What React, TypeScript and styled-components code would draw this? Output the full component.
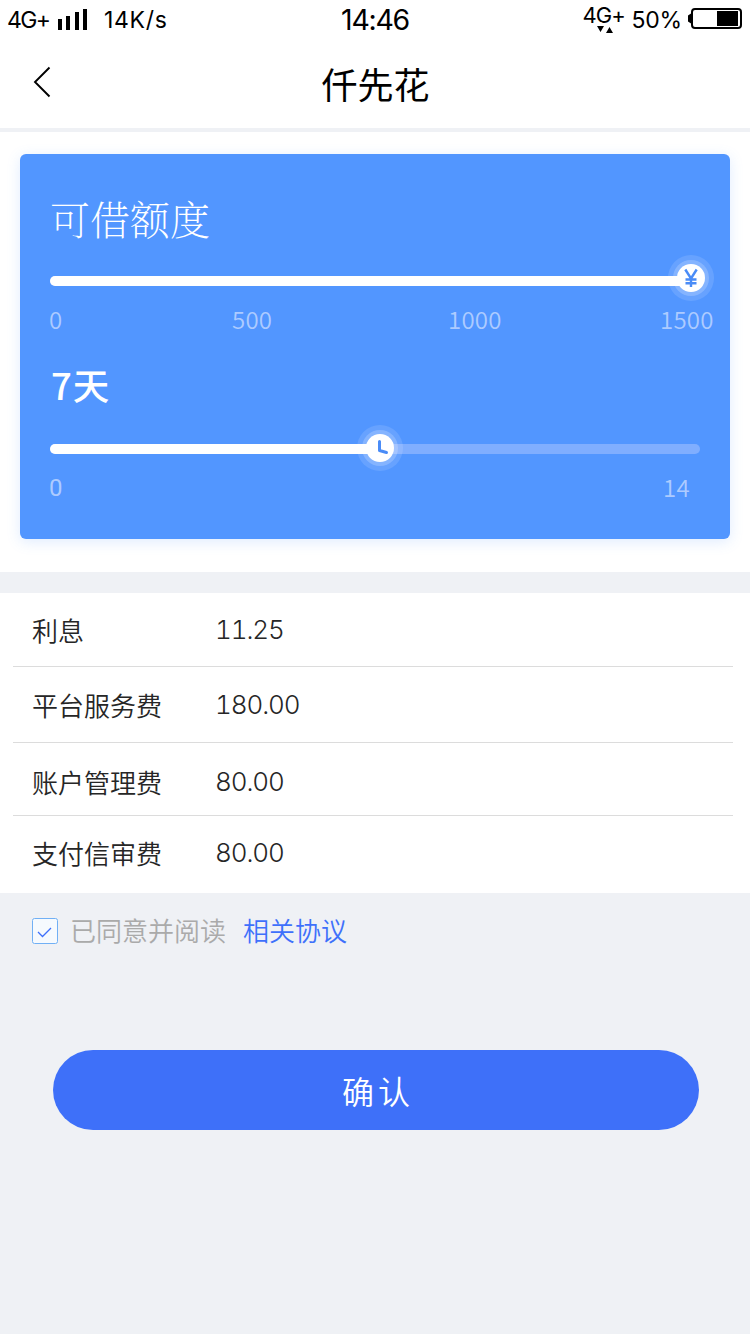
import React from 'react';
import styled, { createGlobalStyle } from 'styled-components';

const GlobalStyle = createGlobalStyle`
  * { box-sizing: border-box; }
  body { margin: 0; background: #eff1f5; }
`;

const cjk = `"Noto Sans CJK SC", sans-serif`;
const latin = `Inter, "Noto Sans CJK SC", sans-serif`;

const Screen = styled.div`
  width: 750px;
  min-height: 1334px;
  display: flex;
  flex-direction: column;
  background: #eff1f5;
  font-family: ${cjk};
  white-space: nowrap;
`;

const StatusBar = styled.div`
  display: grid;
  grid-template-columns: 1fr auto 1fr;
  height: 40px;
  padding: 0 7px;
  background: #fff;
  color: #000;
  font-family: ${latin};
`;

const StatusGroup = styled.div<{ $end?: boolean }>`
  display: flex;
  align-items: flex-start;
  justify-content: ${p => (p.$end ? 'flex-end' : 'flex-start')};
`;

const StatusText = styled.span<{ $size?: number; $track?: number; $top?: number; $gap?: number }>`
  font-size: ${p => p.$size ?? 23}px;
  line-height: 28px;
  letter-spacing: ${p => p.$track ?? 0}px;
  margin-top: ${p => p.$top ?? 6}px;
  margin-left: ${p => p.$gap ?? 0}px;
`;

const SignalIcon = styled.svg`
  margin: 9px 0 0 9px;
`;

const NetworkType = styled.div`
  display: flex;
  flex-direction: column;
  width: 43px;
`;

const TrafficArrows = styled.svg`
  margin: -3px 0 0 14px;
`;

const BatteryIcon = styled.svg`
  margin: 8px 0 0 6px;
`;

const Header = styled.header`
  display: grid;
  grid-template-columns: 101px 1fr 100px;
  height: 92px;
  border-bottom: 4px solid #eff1f5;
  background: #fff;
`;

const BackButton = styled.button`
  display: flex;
  padding: 25px 0 0 32px;
  border: 0;
  background: none;
`;

const Title = styled.h1`
  margin: 0;
  text-align: center;
  font-size: 36px;
  font-weight: 400;
  line-height: 87px;
  color: #000;
`;

const CardSection = styled.section`
  height: 440px;
  padding: 22px 20px 33px;
  background: #fff;
`;

const Card = styled.div`
  display: flex;
  flex-direction: column;
  height: 385px;
  padding: 0 30px;
  border-radius: 6px;
  background: #5296ff;
  box-shadow: 0 3px 14px rgba(82, 150, 255, 0.18);
  color: #fff;
`;

const CardTitle = styled.h2`
  margin: 0;
  padding-top: 34px;
  height: 122px;
  font-family: "Noto Serif CJK SC", ${cjk};
  font-size: 40px;
  font-weight: 200;
  line-height: 60px;
`;

const Term = styled.div`
  height: 102px;
  padding: 15px 0 0 1px;
  font-size: 36.500px;
  font-weight: 500;
  line-height: 56px;
`;

const TermNumber = styled.span`
  margin-right: 1px;
`;

const Track = styled.div`
  position: relative;
  width: 650px;
  height: 10px;
  border-radius: 5px;
  background: #80aeff;
`;

const Fill = styled.div`
  height: 10px;
  border-radius: 5px;
  background: #fff;
`;

const Thumb = styled.svg<{ $top: number }>`
  position: absolute;
  top: ${p => p.$top}px;
  transform: translateX(-50%);
`;

const Scale = styled.div<{ $columns: string }>`
  display: grid;
  grid-template-columns: ${p => p.$columns};
  height: 56px;
  padding-top: 16px;
  margin-left: -1px;
  font-size: 24px;
  font-weight: 350;
  line-height: 34px;
  color: #adcbff;
`;

const Mark = styled.span<{ $condensed?: boolean }>`
  font-family: ${p => (p.$condensed ? `Roboto, ${cjk}` : cjk)};
  font-weight: ${p => (p.$condensed ? 400 : 350)};
  padding-top: ${p => (p.$condensed ? 1 : 0)}px;
  letter-spacing: 0.2px;
`;

const FeeList = styled.dl`
  display: flex;
  flex-direction: column;
  height: 300px;
  margin: 21px 0 0;
  padding: 0 17px 0 13px;
  background: #fff;
`;

const FeeRow = styled.div<{ $height: number; $top: number; $last?: boolean }>`
  display: flex;
  height: ${p => p.$height}px;
  padding: ${p => p.$top}px 0 0 19px;
  border-bottom: ${p => (p.$last ? 'none' : '1px solid #dcdcdc')};
  color: #262626;
  font-size: 26px;
  line-height: 40px;
`;

const FeeName = styled.dt`
  width: 183px;
  font-weight: 350;
`;

const FeeValue = styled.dd`
  margin: 0;
  font-family: ${latin};
  font-weight: 300;
  font-variant-numeric: tabular-nums;
  letter-spacing: -1.1px;
`;

const Agreement = styled.div`
  display: flex;
  height: 157px;
  padding: 16px 0 0 32px;
  font-size: 26px;
  font-weight: 350;
  line-height: 41px;
  color: #aaa;
`;

const Checkbox = styled.svg`
  margin: 9px 12px 0 0;
`;

const AgreementLink = styled.a`
  margin-left: 17px;
  color: #3e70fb;
`;

const ConfirmButton = styled.button`
  width: 646px;
  height: 80px;
  margin-left: 53px;
  padding: 0 0 1px 4px;
  border: 0;
  border-radius: 40px;
  background: #3e70f9;
  color: #fff;
  font-family: ${cjk};
  font-size: 32px;
  font-weight: 350;
  letter-spacing: 4px;
`;

const fees = [
  { name: '利息', value: '11.25', height: 74, top: 17 },
  { name: '平台服务费', value: '180.00', height: 76, top: 18 },
  { name: '账户管理费', value: '80.00', height: 73, top: 19 },
  { name: '支付信审费', value: '80.00', height: 77, top: 17 },
];

function SliderThumb({ at, top, children }: { at: number; top: number; children: React.ReactNode }) {
  return (
    <Thumb $top={top} width="46" height="46" viewBox="0 0 46 46" style={{ left: at }}>
      <circle cx="23" cy="23" r="23" fill="#fff" fillOpacity=".12" />
      <circle cx="23" cy="23" r="18" fill="#fff" fillOpacity=".2" />
      <circle cx="23" cy="23" r="14" fill="#fff" />
      {children}
    </Thumb>
  );
}

export default function App() {
  return (
    <Screen>
      <GlobalStyle />
      <StatusBar>
        <StatusGroup>
          <StatusText $track={-1.6}>4G+</StatusText>
          <SignalIcon width="30" height="21" viewBox="0 0 30 21">
            <path d="M0 10h4v11H0zM8 7h4v14H8zM17 3h4v18h-4zM25 0h4v21h-4z" />
          </SignalIcon>
          <StatusText $gap={15.500} $track={0.7}>14K/s</StatusText>
        </StatusGroup>
        <StatusText $size={28.500} $track={-1.3}>14:46</StatusText>
        <StatusGroup $end>
          <NetworkType>
            <StatusText $size={22} $top={1} $track={-1}>4G+</StatusText>
            <TrafficArrows width="18" height="7" viewBox="0 0 18 7">
              <path d="M0 0h7L3.5 6zM9 7h7L12.500 1z" />
            </TrafficArrows>
          </NetworkType>
          <StatusText $gap={6} $track={-0.2}>50%</StatusText>
          <BatteryIcon width="55" height="21" viewBox="0 0 55 21">
            <rect x="4" y="1" width="49" height="19" rx="3" fill="none" stroke="#000" strokeWidth="2" />
            <path d="M3 5.500 0 7.500v6L3 15.500zM29 3h21v15H29z" />
          </BatteryIcon>
        </StatusGroup>
      </StatusBar>

      <Header>
        <BackButton aria-label="返回">
          <svg width="20" height="34" viewBox="0 0 20 34">
            <path d="M17.500 2.500 3 17l14.500 14.500" fill="none" stroke="#000" strokeWidth="1.900" />
          </svg>
        </BackButton>
        <Title>仟先花</Title>
      </Header>

      <CardSection>
        <Card>
          <CardTitle>可借额度</CardTitle>
          <Track>
            <Fill style={{ width: 641 }} />
            <SliderThumb at={641} top={-21}>
              <path d="M17.300 14.500l5.700 9 5.700-9M23 22.500V32M17.500 24.500h11M17.500 28.300h11" fill="none" stroke="#4a8cf7" strokeWidth="2.400" />
            </SliderThumb>
          </Track>
          <Scale $columns="183px 216px 212px auto">
            <Mark>0</Mark>
            <Mark>500</Mark>
            <Mark>1000</Mark>
            <Mark>1500</Mark>
          </Scale>
          <Term><TermNumber>7</TermNumber>天</Term>
          <Track>
            <Fill style={{ width: 330 }} />
            <SliderThumb at={330} top={-19}>
              <path d="M22.500 16.500V25.500l7 2" fill="none" stroke="#4a8cf7" strokeWidth="3" strokeLinecap="round" strokeLinejoin="round" />
            </SliderThumb>
          </Track>
          <Scale $columns="614px auto">
            <Mark $condensed>0</Mark>
            <Mark>14</Mark>
          </Scale>
        </Card>
      </CardSection>

      <FeeList>
        {fees.map((fee, i) => (
          <FeeRow key={fee.name} $height={fee.height} $top={fee.top} $last={i === fees.length - 1}>
            <FeeName>{fee.name}</FeeName>
            <FeeValue>{fee.value}</FeeValue>
          </FeeRow>
        ))}
      </FeeList>

      <Agreement>
        <Checkbox width="26" height="26" viewBox="0 0 26 26">
          <rect x=".5" y=".5" width="25" height="25" rx="2" fill="#f6fafe" stroke="#71b0f5" />
          <path d="M6 14l4.500 4.500L19 10" fill="none" stroke="#3e70fb" strokeWidth="1.300" />
        </Checkbox>
        <span>已同意并阅读</span>
        <AgreementLink>相关协议</AgreementLink>
      </Agreement>

      <ConfirmButton>确认</ConfirmButton>
    </Screen>
  );
}
